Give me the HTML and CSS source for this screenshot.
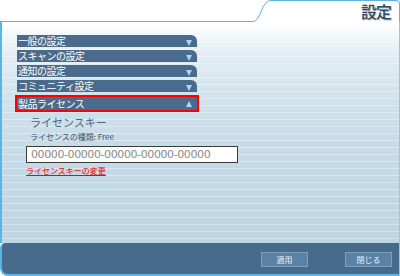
FILE: index.html
```html
<!DOCTYPE html>
<html>
<head>
    <title>設定</title>
    <link rel="stylesheet" href="styles.css">
</head>
<body>
    <div class="window">
        <!-- Header with tab -->
        <div class="header">
            <div class="header-left"></div>
            <svg class="header-curve" width="18" height="22" viewBox="0 0 18 22">
                <path d="M0 21.5 C8 21.5 8 0.5 18 0.5" fill="none" stroke="#5ab4e4" stroke-width="1"/>
            </svg>
            <div class="header-tab">
                <span class="title">設定</span>
            </div>
        </div>

        <!-- Main panel -->
        <div class="panel">
            <div class="menu">
                <div class="menu-bar"><span>一般の設定</span><span class="arrow down"></span></div>
                <div class="menu-bar"><span>スキャンの設定</span><span class="arrow down"></span></div>
                <div class="menu-bar"><span>通知の設定</span><span class="arrow down"></span></div>
                <div class="menu-bar"><span>コミュニティ設定</span><span class="arrow down"></span></div>
                <div class="menu-bar active"><span>製品ライセンス</span><span class="arrow up"></span></div>
            </div>

            <!-- License section -->
            <div class="license">
                <div class="license-title">ライセンスキー</div>
                <div class="license-type">ライセンスの種類: Free</div>
                <input class="license-key" type="text" value="00000-00000-00000-00000-00000">
                <a class="license-link" href="#">ライセンスキーの変更</a>
            </div>
        </div>

        <!-- Bottom buttons -->
        <div class="footer">
            <button class="btn">適用</button>
            <button class="btn">閉じる</button>
        </div>
    </div>
</body>
</html>
```

FILE: styles.css
```css
body {
    margin: 0;
    background-color: #fff;
    font-family: "Noto Sans CJK JP", "DejaVu Sans", sans-serif;
}
.window {
    width: 400px;
    height: 276px;
}
.header {
    display: flex;
    height: 22px;
}
.header-left {
    width: 253px;
    box-sizing: border-box;
    border-bottom: 1px solid #5ab4e4;
}
.header-curve {
    display: block;
    flex: none;
}
.header-tab {
    flex: 1;
    display: flex;
    justify-content: flex-end;
    box-sizing: border-box;
    border-top: 1px solid #5ab4e4;
    border-right: 1px solid #5ab4e4;
    border-top-right-radius: 4px;
    padding-right: 8px;
}
.title {
    font-size: 16px;
    line-height: 20px;
    font-weight: 500;
    color: #2f4a62;
    letter-spacing: -1px;
    text-shadow: 1px 1px 1px rgba(0, 0, 0, 0.25);
}
.panel {
    height: 221px;
    box-sizing: border-box;
    border-left: 2px solid #5ab4e4;
    border-right: 1px solid #8ccbec;
    padding: 13px 0 0 15px;
    background:
        repeating-linear-gradient(to bottom, transparent 0px, transparent 6px, rgba(255, 255, 255, 0.35) 6px, rgba(255, 255, 255, 0.35) 7px),
        linear-gradient(to bottom, #ffffff 0px, #e4eef4 30px, #cfe1eb 80px, #c5dae6 140px, #bdd4e1 221px);
}
.menu {
    display: flex;
    flex-direction: column;
    gap: 3px;
    width: 180px;
}
.menu-bar {
    display: flex;
    justify-content: space-between;
    align-items: center;
    height: 12px;
    box-sizing: border-box;
    background-color: #4a6b8b;
    border-top-right-radius: 6px;
    color: #fff;
    font-size: 10px;
    line-height: 12px;
    padding: 0 5px 0 1px;
    letter-spacing: -0.5px;
}
.menu-bar.active {
    width: 184px;
    height: 17px;
    border: 2px solid #f00;
    border-radius: 0;
    margin-left: -2px;
    padding: 0 5px 0 1px;
}
.arrow {
    width: 0;
    height: 0;
    border-left: 3.5px solid transparent;
    border-right: 3.5px solid transparent;
}
.arrow.down {
    border-top: 6px solid #a9d6f2;
    margin-top: 3px;
}
.arrow.up {
    border-bottom: 6px solid #a9d6f2;
}
.license {
    display: flex;
    flex-direction: column;
    align-items: flex-start;
    padding: 3px 0 0 9px;
}
.license-title {
    font-size: 11px;
    line-height: 14px;
    color: #4b6a88;
    padding-left: 4px;
}
.license-type {
    font-size: 8px;
    line-height: 12px;
    margin-top: 2px;
    color: #3e5670;
    padding-left: 4px;
}
.license-key {
    width: 212px;
    height: 17px;
    box-sizing: border-box;
    margin: 3px 0 0 0;
    padding: 0 0 0 4px;
    border: 1px solid #3a3a3a;
    background: #fff;
    color: #8a8a8a;
    font-family: "DejaVu Sans", sans-serif;
    font-size: 11px;
    letter-spacing: -0.4px;
}
.license-link {
    font-size: 8px;
    line-height: 11px;
    color: #f00;
    margin-top: 2px;
}
.footer {
    display: flex;
    justify-content: flex-end;
    align-items: flex-start;
    gap: 37px;
    height: 33px;
    box-sizing: border-box;
    padding: 9px 7px 0 0;
    background-color: #486a8c;
    border-left: 2px solid #5ab4e4;
    border-right: 1px solid #8ccbec;
    border-bottom: 2px solid #5ab4e4;
    border-top-left-radius: 5px;
    border-bottom-left-radius: 8px;
}
.btn {
    width: 47px;
    height: 15px;
    padding: 0;
    background-color: #5b81a4;
    border: 1px solid #7ba0c0;
    color: #e8f2fa;
    font-family: "Noto Sans CJK JP", sans-serif;
    font-size: 8px;
    line-height: 13px;
}
```
